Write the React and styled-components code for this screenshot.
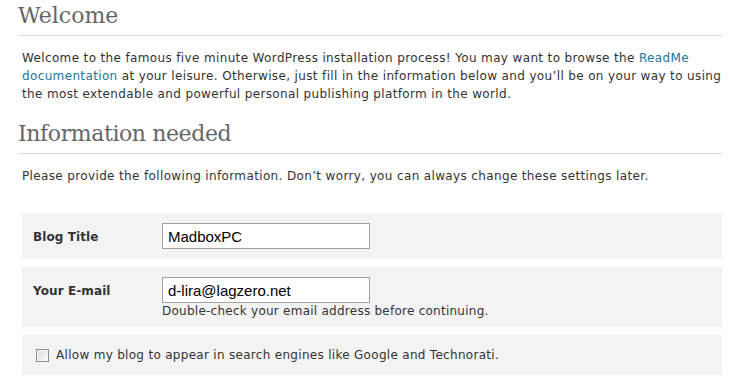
import { createGlobalStyle, styled } from "styled-components";

const GlobalStyle = createGlobalStyle`
  body {
    margin: 0;
    background: #fff;
    font-family: "DejaVu Sans", Verdana, sans-serif;
    color: #333;
  }
`;

const Page = styled.div`
  width: 704px;
  padding: 0 0 0 18px;
`;

const Heading = styled.h1`
  margin: 0;
  padding: 3px 0 6px;
  font-family: "DejaVu Serif", Georgia, serif;
  font-weight: normal;
  font-size: 22px;
  line-height: 26px;
  letter-spacing: ${(p) => p.$spacing || 0}px;
  color: #666;
  border-bottom: 1px solid #dadada;
  margin-top: ${(p) => p.$top || 0}px;
`;

const Text = styled.p`
  margin: 13px -12px 0 4px;
  font-size: 12px;
  line-height: 18px;
  letter-spacing: 0.36px;
  color: #333;
`;

const Link = styled.a`
  color: #21759b;
  text-decoration: none;
`;

const FormTable = styled.div`
  display: flex;
  flex-direction: column;
  gap: 8px;
  margin: 28px 0 0 4px;
`;

const Row = styled.div`
  display: flex;
  align-items: flex-start;
  background: #f3f3f3;
  padding: ${(p) => p.$pad || "10px 10px 10px 11px"};
  height: ${(p) => p.$h}px;
  box-sizing: border-box;
`;

const Label = styled.label`
  width: 129px;
  padding-top: 7px;
  font-size: 12px;
  font-weight: bold;
  letter-spacing: 0.1px;
  color: #333;
`;

const Field = styled.div`
  display: flex;
  flex-direction: column;
`;

const TextInput = styled.input`
  width: 208px;
  height: 26px;
  box-sizing: border-box;
  border: 1px solid #a3a3a3;
  background: #fff;
  padding: 1px 5px 0;
  font-family: "Liberation Sans", Arial, sans-serif;
  font-size: 15px;
  color: #000;
  outline: none;
`;

const Hint = styled.span`
  font-size: 12px;
  line-height: 17px;
  letter-spacing: 0.25px;
  color: #333;
`;

const CheckLabel = styled.label`
  display: flex;
  align-items: center;
  gap: 7px;
  font-size: 12px;
  letter-spacing: 0.3px;
  color: #333;
`;

const Box = styled.span`
  width: 11px;
  height: 11px;
  border: 1px solid #8f8f8f;
  background: linear-gradient(135deg, #dcdcdc, #fbfbfb);
  box-shadow: inset 0 0 0 1px #f4f4f4;
  margin-left: 3px;
`;

export default function App() {
  return (
    <>
      <GlobalStyle />
      <Page>
        <Heading>Welcome</Heading>
        <Text>
          Welcome to the famous five minute WordPress installation process! You
          may want to browse the <Link href="#">ReadMe documentation</Link> at
          your leisure. Otherwise, just fill in the information below and
          you’ll be on your way to using the most extendable and powerful
          personal publishing platform in the world.
        </Text>
        <Heading $top={15} $spacing={-0.4}>
          Information needed
        </Heading>
        <Text>
          Please provide the following information. Don’t worry, you can always
          change these settings later.
        </Text>
        <FormTable>
          <Row $h={46}>
            <Label>Blog Title</Label>
            <TextInput defaultValue="MadboxPC" />
          </Row>
          <Row $h={60}>
            <Label>Your E-mail</Label>
            <Field>
              <TextInput defaultValue="d-lira@lagzero.net" />
              <Hint>Double-check your email address before continuing.</Hint>
            </Field>
          </Row>
          <Row $h={40} $pad="13px 10px 10px 11px">
            <CheckLabel>
              <Box />
              Allow my blog to appear in search engines like Google and
              Technorati.
            </CheckLabel>
          </Row>
        </FormTable>
      </Page>
    </>
  );
}
